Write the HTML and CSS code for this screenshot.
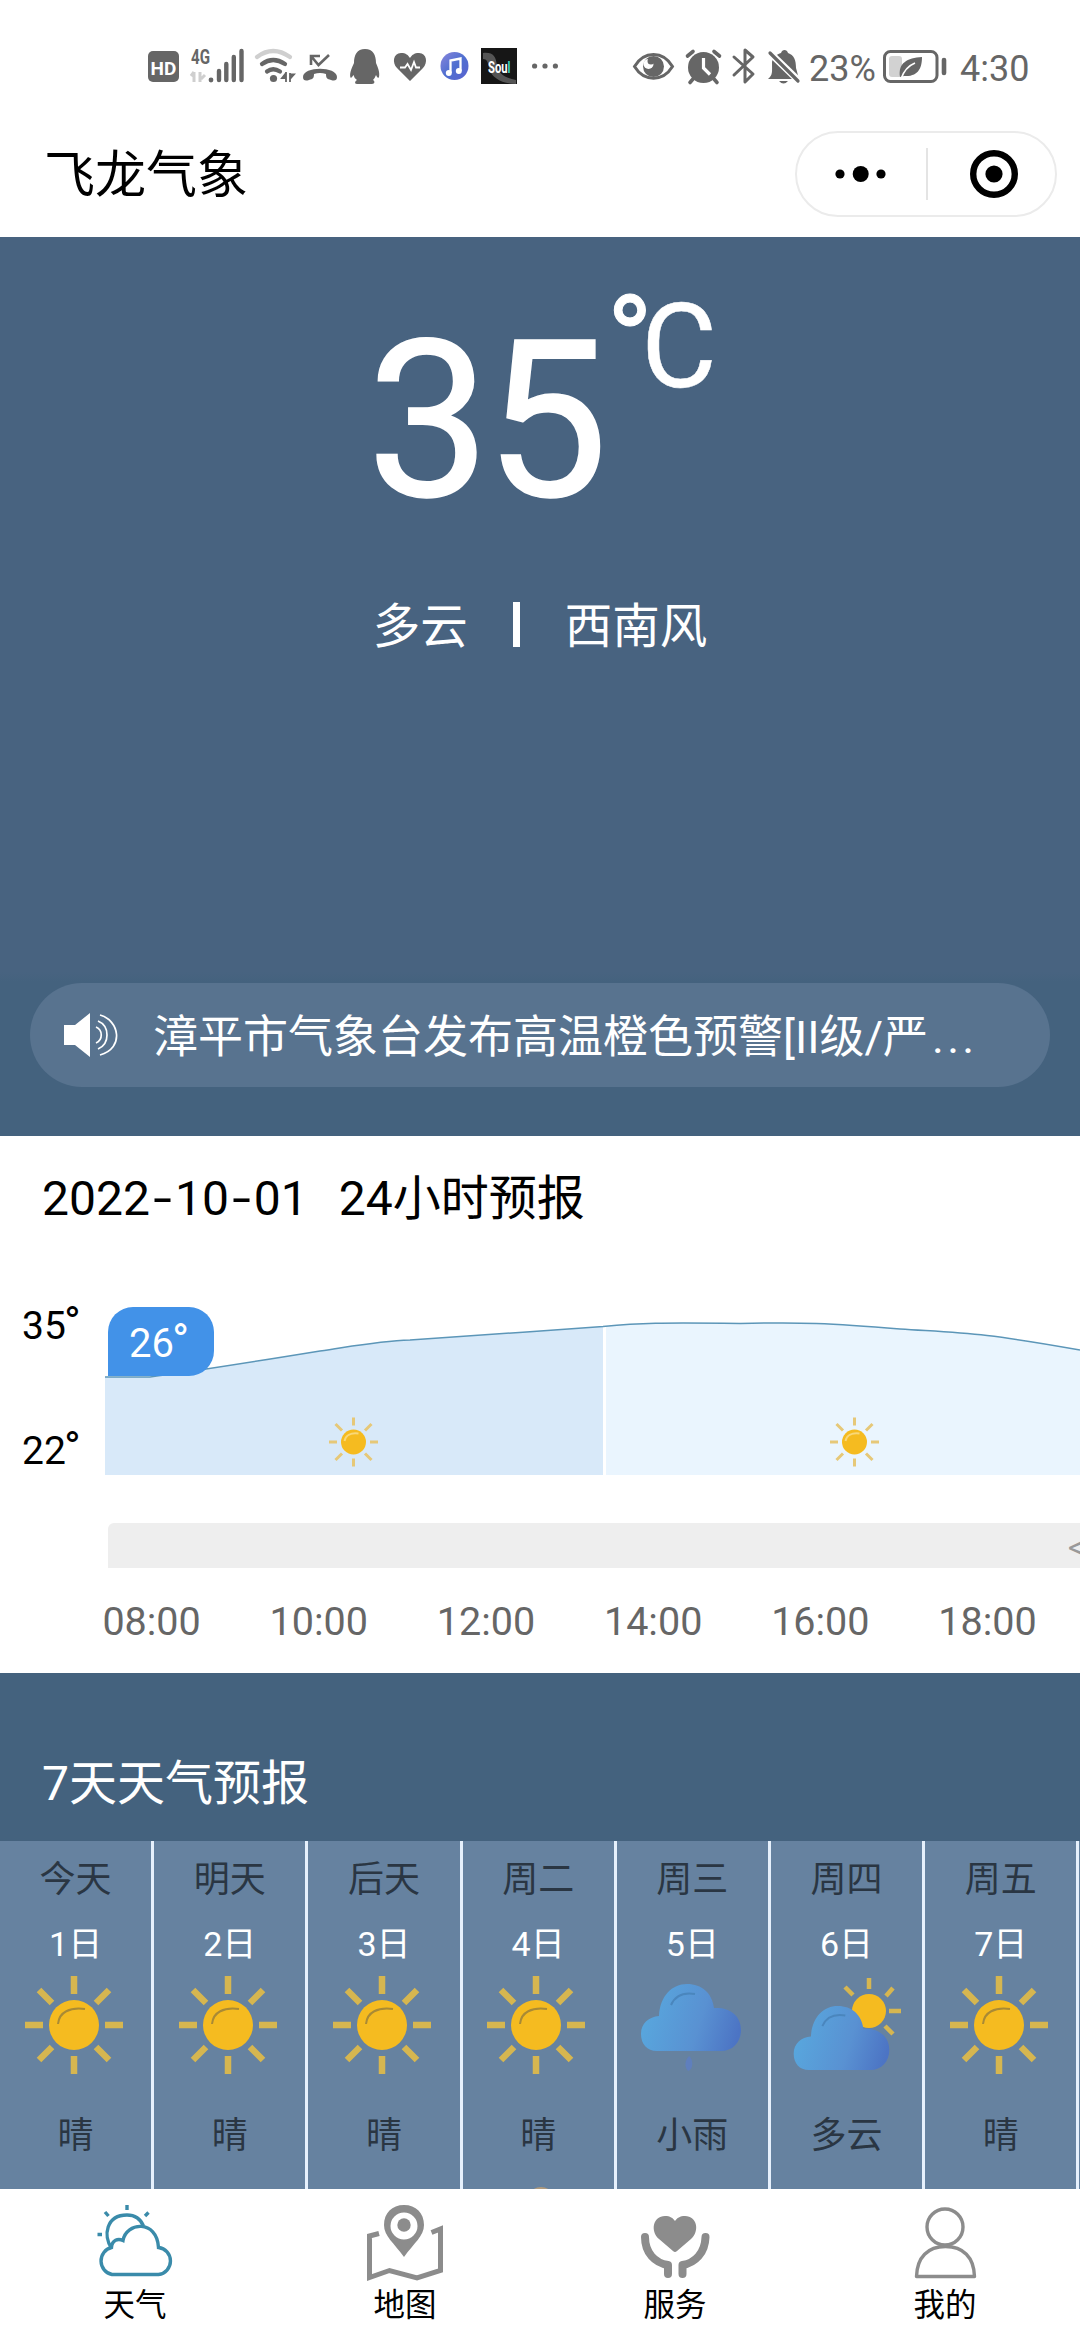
FILE: index.html
```html
<!DOCTYPE html>
<html lang="zh-CN">
<head>
<meta charset="utf-8">
<title>飞龙气象</title>
<link rel="stylesheet" href="styles.css">
</head>
<body>
<svg class="defs" width="0" height="0" aria-hidden="true">
  <defs>
    <linearGradient id="cloudFill" x1="0" y1=".4" x2="1" y2=".6">
      <stop offset="0" stop-color="#58a8de"/><stop offset=".6" stop-color="#5991d2"/><stop offset="1" stop-color="#4c74c4"/>
    </linearGradient>
    <linearGradient id="noteFill" x1="0" y1="0" x2="1" y2="1">
      <stop offset="0" stop-color="#8a86dc"/><stop offset=".5" stop-color="#4f6fd0"/><stop offset="1" stop-color="#5a62cf"/>
    </linearGradient>
    <symbol id="sun" viewBox="-50 -50 100 100">
      <g stroke="#d6b650" stroke-width="6.5">
        <path d="M0-49V-31M0 31V49M-49 0H-31M31 0H49M-35-35L-22-22M22 22L35 35M-35 35L-22 22M22-22L35-35"/>
      </g>
      <circle r="25" fill="#f5bb20"/>
      <path d="M-16-1C-15-13-4-18 11-16" fill="none" stroke="#a98a35" stroke-width="2"/>
    </symbol>
    <symbol id="smallSun" viewBox="-50 -50 100 100">
      <g stroke="#e6c878" stroke-width="6">
        <path d="M0-49V-33M0 33V49M-49 0H-33M33 0H49M-36-36L-23-23M23 23L36 36M-36 36L-23 23M23-23L36-36"/>
      </g>
      <circle r="25" fill="#f5bb20"/>
      <path d="M-18-2C-16-13-6-19 10-17" fill="none" stroke="#f9d878" stroke-width="4"/>
    </symbol>
    <symbol id="cloud" viewBox="0 0 100 68">
      <path d="M16 67C6 67 0 60 0 50C0 39 8 33 18 32C19 12 31 0 46 0C61 0 71 9 73 24C88 23 100 31 100 46C100 58 92 67 80 67Z" fill="url(#cloudFill)"/>
      <path d="M30 21C34 12 42 8 54 10" fill="none" stroke="#4a86bd" stroke-width="2"/>
    </symbol>
  </defs>
</svg>
<div class="app">
  <header class="status">
    <svg class="s-hd" width="31" height="36" viewBox="148 48 31 36"><rect x="148" y="51" width="31" height="31" rx="5"/><text x="163.5" y="74.5" text-anchor="middle" class="hd-text">HD</text></svg>
    <svg class="s-signal" width="53" height="36" viewBox="191 48 53 36">
      <text x="191" y="64" class="g-text" textLength="19" lengthAdjust="spacingAndGlyphs">4G</text>
      <path d="M194 72V82M194 72L191 76M200 72V82M205 75L201 79" stroke="#cfcfcf" stroke-width="3" fill="none"/>
      <circle cx="211" cy="80" r="2.4"/>
      <path d="M219 71V80M226.3 64V80M233.8 57V80M241.5 51V80" stroke="#666" stroke-width="4.4" stroke-linecap="round"/>
    </svg>
    <svg class="s-wifi" width="42" height="36" viewBox="254 48 42 36">
      <g fill="none" stroke="#666" stroke-width="4.2" stroke-linecap="round"><path d="M257 57Q273 45 290 57" stroke="#cfcfcf"/><path d="M262 64Q273 56 285 64M267 71.500Q273 67 280 71.500"/></g>
      <circle cx="273.500" cy="78.500" r="3.600"/>
      <path d="M286 73L282 78H286M286 72V82M290 73V82M290 79L294 74.500H290" stroke="#666" stroke-width="1.800"/>
    </svg>
    <svg class="s-call" width="34" height="36" viewBox="303 48 34 36">
      <path d="M311 65V56H320M311 56L318.500 65L329 55" fill="none" stroke="#666" stroke-width="2.600"/>
      <path d="M303 77C303 66 337 66 337 77C337 81 334 81 331 80C327 79 326 78 326 74Q320 72 314 74C314 78 313 79 309 80C306 81 303 81 303 77Z"/>
    </svg>
    <svg class="s-qq" width="30" height="36" viewBox="350 48 30 36"><path d="M365 49C373 49 376 55 376 63C378 68 380 72 379 77C378 79 377 77 376 75Q375 78 373 80C375 81 375 84 372 84H357C354 84 355 81 357 80Q354 78 353.500 75C352 77 351 79 350.300 77C349.500 72 352 68 354 63C354 55 357 49 365 49Z"/></svg>
    <svg class="s-heart" width="32" height="36" viewBox="394 48 32 36"><path d="M410 81L397 68C392 63 393 53 401 53C406 53 408 55 410 58C412 55 414 53 419 53C427 53 428 63 423 68Z"/><path d="M400 67.500H405L407.500 64L411 70L414 62L416 67.500H420" fill="none" stroke="#fff" stroke-width="1.800"/></svg>
    <svg class="s-note" width="30" height="36" viewBox="440 48 30 36"><circle cx="454.500" cy="66" r="14" fill="url(#noteFill)"/><path d="M450.500 73V60.500L460.500 58.500V71" fill="none" stroke="#fff" stroke-width="2.300"/><circle cx="448.800" cy="73" r="3" fill="#fff"/><circle cx="458.800" cy="71" r="3" fill="#fff"/></svg>
    <svg class="s-soul" width="36" height="36" viewBox="0 0 36 36"><rect width="36" height="36" fill="#161616"/><path d="M2 5C12 4 15 8 16 18C18 26 24 30 35 32V36C22 36 10 30 8 20C7 14 6 11 2 11Z" fill="#555"/><text transform="translate(7 25) scale(.66 1)" class="soul-text">Sou<tspan fill="#38d5bd">l</tspan></text></svg>
    <svg class="s-more" width="26" height="36" viewBox="0 0 26 36"><circle cx="2.600" cy="18" r="2.600"/><circle cx="13" cy="18" r="2.600"/><circle cx="23.400" cy="18" r="2.600"/></svg>
    <svg class="s-eye" width="42" height="36" viewBox="633 48 42 36"><path d="M634.500 66.500C644 50.500 663 50.500 672.500 66.500C663 82 644 82 634.500 66.500Z" fill="none" stroke="#666" stroke-width="3"/><circle cx="653.500" cy="66.500" r="10.500"/><circle cx="648.500" cy="64" r="5" fill="#fff"/><circle cx="651" cy="61" r="3.500"/></svg>
    <svg class="s-alarm" width="35" height="36" viewBox="686 48 35 36"><circle cx="703.500" cy="67.500" r="15.500"/><path d="M687.500 56L693 51.500M719.500 56L714 51.500M693 79L690 82.500M714 79L717 82.500" stroke="#666" stroke-width="3.600" stroke-linecap="round"/><path d="M703.500 58V68L710 74.500" stroke="#fff" stroke-width="3.200" fill="none"/></svg>
    <svg class="s-bt" width="24" height="36" viewBox="732 48 24 36"><path d="M734 57L753 74L745 82V50L753 57L734 75" fill="none" stroke="#666" stroke-width="3" stroke-linecap="round" stroke-linejoin="round"/></svg>
    <svg class="s-bell" width="32" height="36" viewBox="768 48 32 36"><path d="M768 79C773 75 772 72 772 62C773 57 777 54 781 53C782 49 787 49 788 53C794 55 796 60 796 68L799 79Z"/><path d="M779 81H788Q783.500 86 779 81Z"/><path d="M769 52L799 81" stroke="#fff" stroke-width="7"/><path d="M770 53L798 81" stroke="#666" stroke-width="3.200" stroke-linecap="round"/></svg>
    <span class="s-pct">23%</span>
    <svg class="s-batt" width="64" height="36" viewBox="883 48 64 36"><rect x="884.500" y="51.500" width="52.500" height="30" rx="6" fill="none" stroke="#666" stroke-width="3"/><rect x="889" y="56" width="13" height="21" rx="3" fill="#d2d2d2"/><path d="M922 57C907 58 898 63 900 77L904 76C919 77 922 67 922 57Z"/><path d="M901 79Q905 67 915 63" stroke="#fff" stroke-width="1.700" fill="none"/><path d="M944 60V73" stroke="#666" stroke-width="4.600" stroke-linecap="round"/></svg>
    <span class="s-time">4:30</span>
  </header>

  <nav class="nav">
    <h1 class="nav-title">飞龙气象</h1>
    <div class="capsule">
      <svg class="cap-half" width="129" height="82" viewBox="0 1 129 82"><circle cx="43" cy="42" r="4.600"/><circle cx="63.700" cy="42" r="8"/><circle cx="84" cy="42" r="4.600"/></svg>
      <i class="cap-line"></i>
      <svg class="cap-half" width="126" height="82" viewBox="0 1 126 82"><circle cx="66" cy="42" r="20.800" fill="none" stroke="#000" stroke-width="6.400"/><circle cx="66" cy="42" r="8.600"/></svg>
    </div>
  </nav>

  <section class="hero">
    <div class="temp"><span class="temp-num">35</span><span class="temp-deg">°</span><span class="temp-c">C</span></div>
    <div class="wx"><span>多云</span><i class="wx-line"></i><span>西南风</span></div>
    <div class="notice">
      <svg class="speaker" width="58" height="46" viewBox="0 0 58 46"><path d="M0 13H11L26 1V45L11 33H0Z" fill="#fff"/><g fill="none" stroke="#fff" stroke-width="1.700"><path d="M32 15C39 18 39 28 32 31M34 9C46 14 46 32 34 37M36 3C55 8 61 36 36 43"/></g></svg>
      <p class="notice-text">漳平市气象台发布高温橙色预警[II级/严<span class="dots">...</span></p>
    </div>
  </section>

  <section class="hourly">
    <h2 class="hourly-title"><span>2022</span><span class="dash">-</span><span>10</span><span class="dash">-</span><span>01</span><span class="hourly-sub">24小时预报</span></h2>
    <div class="chart">
      <div class="axis"><span>35<b class="deg">°</b></span><span>22<b class="deg">°</b></span></div>
      <div class="plot">
        <svg class="area" width="975" height="180" viewBox="105 1300 975 180">
          <path d="M105 1377H150C190 1372 240 1364 320 1351C360 1345 380 1341 410 1340C470 1336 540 1331 603 1326.500V1475H105Z" fill="#d8e9f9"/>
          <path d="M606 1326.500C640 1323 660 1322.500 740 1323.500C800 1322 830 1323 900 1329C960 1333 980 1332 1080 1350V1475H606Z" fill="#eaf5fe"/>
          <path d="M105 1377H150C190 1372 240 1364 320 1351C360 1345 380 1341 410 1340C470 1336 540 1331 603 1326.500C640 1323 660 1322.500 740 1323.500C800 1322 830 1323 900 1329C960 1333 980 1332 1080 1350" fill="none" stroke="#5c96b8" stroke-width="1.500"/>
          <use href="#smallSun" x="328.500" y="1417" width="50" height="50"/>
          <use href="#smallSun" x="829.500" y="1417" width="50" height="50"/>
        </svg>
        <div class="bubble">26<b class="deg">°</b></div>
      </div>
    </div>
    <div class="wind"><span>&lt;</span></div>
    <div class="hours"><span>08:00</span><span>10:00</span><span>12:00</span><span>14:00</span><span>16:00</span><span>18:00</span></div>
  </section>

  <section class="week">
    <h2 class="week-title">7天天气预报</h2>
    <div class="days">
      <div class="day"><span class="name">今天</span><span class="date">1日</span><svg class="ico" viewBox="0 0 110 104"><use href="#sun" x="3" y="3" width="100" height="100"/></svg><span class="desc">晴</span></div>
      <div class="day"><span class="name">明天</span><span class="date">2日</span><svg class="ico" viewBox="0 0 110 104"><use href="#sun" x="3" y="3" width="100" height="100"/></svg><span class="desc">晴</span></div>
      <div class="day"><span class="name">后天</span><span class="date">3日</span><svg class="ico" viewBox="0 0 110 104"><use href="#sun" x="3" y="3" width="100" height="100"/></svg><span class="desc">晴</span></div>
      <div class="day"><span class="name">周二</span><span class="date">4日</span><svg class="ico" viewBox="0 0 110 104"><use href="#sun" x="3" y="3" width="100" height="100"/></svg><span class="desc">晴</span><i class="peek"></i></div>
      <div class="day"><span class="name">周三</span><span class="date">5日</span><svg class="ico" viewBox="0 0 110 104"><use href="#cloud" x="4" y="12" width="100" height="68"/><path d="M52 84C57 88 56 98 51 99C47 95 48 88 52 84Z" fill="#5f7fbd"/></svg><span class="desc">小雨</span></div>
      <div class="day"><span class="name">周四</span><span class="date">6日</span><svg class="ico" viewBox="0 0 110 104"><g stroke="#d6b650" stroke-width="4.500"><path d="M77 6V17M53 15L61 23M101 16L94 24M97 39H109M93 54L101 62"/></g><circle cx="77" cy="39" r="17" fill="#f5bb20"/><use href="#cloud" x="1" y="34" width="97" height="65"/></svg><span class="desc">多云</span></div>
      <div class="day"><span class="name">周五</span><span class="date">7日</span><svg class="ico" viewBox="0 0 110 104"><use href="#sun" x="3" y="3" width="100" height="100"/></svg><span class="desc">晴</span></div>
      <div class="day"></div>
    </div>
  </section>

  <footer class="tabs">
    <div class="tab"><svg width="80" height="80" viewBox="95 2204 80 80"><g fill="none" stroke="#3a8baa" stroke-width="3.400"><path d="M111.500 2248C103 2236 106 2215 127 2215C136 2215 141 2220 143.500 2226"/><path d="M112 2274.500A13.500 13.800 0 0 1 111.500 2247.500C112 2240 118 2238 123 2240.500C126 2222 157 2219 158.500 2247.500A13.600 13.600 0 0 1 158.500 2274.500Z"/><path d="M97.500 2234.500H102M105 2212L108.500 2216M127 2205V2210M148.500 2212.500L145 2216"/></g></svg><span>天气</span></div>
    <div class="tab"><svg width="80" height="80" viewBox="365 2204 80 80" fill="#8c8c8c"><path fill-rule="evenodd" d="M404 2205C416 2205 424 2213 424 2225C424 2236 414 2243 404 2257C394 2243 384 2236 384 2225C384 2213 392 2205 404 2205ZM404 2212.500A13.500 13.500 0 1 0 404 2239.500A13.500 13.500 0 1 0 404 2212.500Z"/><circle cx="404" cy="2225" r="6.700"/><path d="M379 2233.500L369.500 2236V2277.500L389.500 2270.500L417 2278L440.500 2270.500V2229L431.500 2232.500" fill="none" stroke="#8c8c8c" stroke-width="5"/></svg><span>地图</span></div>
    <div class="tab"><svg width="80" height="80" viewBox="635 2204 80 80" fill="#8c8c8c"><path d="M673 2251L659 2239C650 2231 653 2216 665 2216C670 2216 673 2218 675 2221C677 2218 680 2216 685 2216C697 2216 700 2231 691 2239L677 2251Q675 2253 673 2251Z"/><path d="M645 2237C645 2253 655 2263 668 2265V2274M705.500 2237C705 2253 695 2263 682.500 2265V2274" fill="none" stroke="#8c8c8c" stroke-width="8" stroke-linecap="round" stroke-linejoin="round"/></svg><span>服务</span></div>
    <div class="tab"><svg width="80" height="80" viewBox="905 2204 80 80"><g fill="none" stroke="#8c8c8c" stroke-width="3.400" stroke-linejoin="round"><circle cx="945" cy="2227" r="18"/><path d="M916.500 2276.500C917 2257 928 2246.500 945.500 2246.500C963 2246.500 974 2257 974.500 2276.500Z"/></g></svg><span>我的</span></div>
  </footer>
</div>
</body>
</html>
```

FILE: styles.css
```css
* { box-sizing: border-box; margin: 0; padding: 0; }
body { background: #fff; font-family: Roboto, "Noto Sans CJK SC", sans-serif; color: #000; }
i, b { font-style: normal; font-weight: 400; }
h1, h2 { font-weight: 400; }
svg { display: block; flex: none; overflow: visible; }
.defs { position: absolute; }
.app { width: 1080px; height: 2340px; overflow: hidden; display: flex; flex-direction: column; }

.status { height: 110px; padding: 22px 0 0 148px; display: flex; align-items: center; fill: #666; color: #666; font-size: 36px; line-height: 40px; white-space: nowrap; }
.status svg { fill: #666; }
.s-signal { margin-left: 12px; }
.s-wifi { margin-left: 10px; }
.s-call { margin-left: 7px; }
.s-qq { margin-left: 13px; }
.s-heart { margin-left: 14px; }
.s-note { margin-left: 14px; }
.s-soul { margin-left: 11px; }
.s-more { margin-left: 15px; }
.s-eye { margin-left: 75px; }
.s-alarm { margin-left: 11px; }
.s-bt { margin-left: 11px; }
.s-bell { margin-left: 12px; }
.s-pct { margin-left: 9px; width: 66px; margin-top: 6px; }
.s-batt { margin-left: 8px; }
.s-time { margin-left: 13px; margin-top: 6px; }
.hd-text { font: 700 19px Roboto, sans-serif; fill: #fff; }
.g-text { font: 700 20px Roboto, sans-serif; fill: #666; }
.soul-text { font: 700 17px Roboto, sans-serif; fill: #fff; }

.nav { height: 127px; padding: 0 23px 0 44px; display: flex; align-items: center; justify-content: space-between; }
.nav-title { font: 400 51px/60px "Noto Sans CJK SC", sans-serif; padding-bottom: 5px; }
.capsule { width: 262px; height: 86px; border: 2px solid #ebebeb; border-radius: 43px; display: flex; align-items: center; }
.cap-line { flex: none; width: 2px; height: 52px; background: #e4e4e4; }

.hero { height: 899px; background: linear-gradient(#486380 0 735px, #44627e 745px); color: #fff; display: flex; flex-direction: column; align-items: center; }
.temp { height: 317px; padding-top: 48px; width: 346px; display: flex; align-items: flex-start; }
.temp-num { font-size: 219px; line-height: 272px; letter-spacing: -5px; -webkit-text-stroke: 1.5px #fff; }
.temp-deg { margin: -4px 0 0 3px; font-size: 126px; line-height: 122px; -webkit-text-stroke: 1px #fff; }
.temp-c { margin: 4px 0 0 -12px; font-size: 116px; line-height: 116px; -webkit-text-stroke: .5px #fff; }
.wx { height: 138px; display: flex; align-items: center; font: 400 47.500px/60px "Noto Sans CJK SC", sans-serif; }
.wx-line { width: 7px; height: 45px; background: #fff; margin: 3px 45px 0; }
.notice { width: 1020px; height: 104px; margin-top: 291px; border-radius: 52px; background: #58738f; padding-left: 34px; display: flex; align-items: center; }
.notice-text { margin: 6px 0 0 31px; font-size: 45px; line-height: 60px; white-space: nowrap; }
.dots { margin-left: 4px; letter-spacing: 3.300px; }

.hourly { height: 537px; display: flex; flex-direction: column; }
.hourly-title { height: 126px; padding-left: 42px; display: flex; align-items: center; font-size: 48px; line-height: 60px; }
.dash { width: 25px; text-align: center; transform: scaleX(1.4); }
.hourly-sub { margin-left: 31px; }
.chart { height: 218px; padding-top: 38px; display: flex; }
.axis { width: 105px; padding: 6px 0 0 22px; display: flex; flex-direction: column; gap: 85px; font-size: 39px; line-height: 40px; }
.deg { display: inline-block; transform: translate(-1px, -4px) scale(1.15); transform-origin: 50% 30%; }
.plot { position: relative; }
.bubble { position: absolute; left: 3px; top: 7px; width: 106px; height: 69px; border-radius: 25px 25px 25px 0; background: #4292e8; color: #fff; font-size: 40px; line-height: 74px; padding-left: 21px; }
.wind { margin: 43px 0 0 108px; height: 45px; background: #eee; border-radius: 6px 0 0 0; overflow: hidden; color: #999; font-size: 32px; line-height: 48px; white-space: nowrap; }
.wind span { margin-left: 960px; }
.hours { margin: 32px 0 0 68px; display: flex; font-size: 39.500px; line-height: 44px; color: #666; }
.hours span { width: 167.200px; flex: none; text-align: center; }

.week { height: 516px; background: #44627e; color: #fff; display: flex; flex-direction: column; }
.week-title { height: 168px; padding: 51px 0 0 42px; font-size: 48px; line-height: 120px; }
.days { height: 348px; display: flex; overflow: hidden; }
.day { position: relative; flex: none; width: 154.200px; height: 348px; background: #6682a0; border-right: 3px solid #e6f0fc; padding-top: 14px; display: flex; flex-direction: column; align-items: center; overflow: hidden; color: #2a3643; font-size: 36px; line-height: 50px; }
.date { margin-top: 14px; color: #fff; font-size: 34px; }
.ico { width: 110px; height: 104px; margin-top: 3px; }
.desc { margin-top: 35px; }
.peek { position: absolute; left: 64px; top: 346px; width: 28px; height: 28px; border-radius: 50%; background: #b09a7c; }

.tabs { height: 151px; padding-top: 15px; display: flex; }
.tab { width: 270px; display: flex; flex-direction: column; align-items: center; font: 400 31.500px/40px "Noto Sans CJK SC", sans-serif; }
.tab span { margin-top: -2px; }
```
